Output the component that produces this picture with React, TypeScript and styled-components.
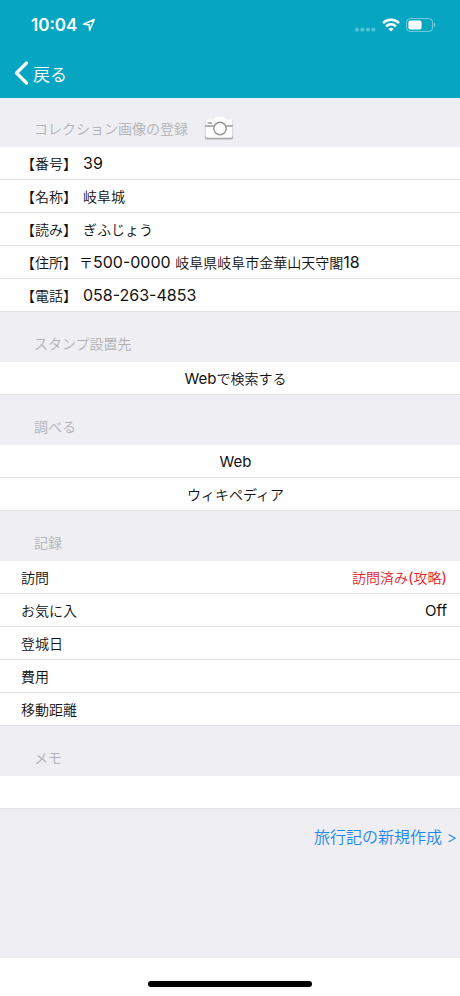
import React from "react";
import styled, { createGlobalStyle } from "styled-components";

const GlobalStyle = createGlobalStyle`
  *, *::before, *::after { box-sizing: border-box; }
  body {
    margin: 0;
    background: #fff;
    color: #111;
    font-family: Inter, "Noto Sans CJK JP", sans-serif;
    font-size: 14px;
    font-weight: 350;
  }
  button, input { font: inherit; color: inherit; }
`;

const Screen = styled.div`
  display: flex;
  flex-direction: column;
  min-height: 100vh;
`;

const TopBar = styled.header`
  display: flex;
  flex-direction: column;
  background: #06a6c3;
  color: #fff;
`;

const StatusBar = styled.div`
  display: flex;
  align-items: center;
  justify-content: space-between;
  height: 50px;
  padding: 0 24px 0 31px;
`;

const Clock = styled.div`
  display: flex;
  align-items: center;
  gap: 5px;
  font-size: 17px;
  font-weight: 600;
`;

const Indicators = styled.div`
  display: flex;
  align-items: center;
  gap: 6px;
`;

const BackButton = styled.button`
  display: flex;
  align-items: center;
  align-self: flex-start;
  gap: 4px;
  height: 48px;
  padding: 0 14px 2px;
  border: 0;
  background: none;
  font-size: 17px;
`;

const Content = styled.main`
  flex: 1;
  background: #eeeef3;
`;

const SectionHeader = styled.div<{ $first?: boolean }>`
  display: flex;
  align-items: flex-end;
  gap: 16px;
  height: ${(p) => (p.$first ? 49 : 50)}px;
  padding: 0 34px 6px;
`;

const SectionTitle = styled.h2`
  margin: 0;
  color: #b2b2b6;
  font-size: 14px;
  font-weight: 350;
  line-height: 24px;
`;

const CameraButton = styled.button`
  display: flex;
  padding: 0;
  border: 0;
  background: none;
`;

const List = styled.div`
  background: #fff;
`;

const Row = styled.div`
  display: flex;
  align-items: center;
  height: 33px;
  padding: 0 13px 0 21px;
  border-bottom: 1px solid #e2e2e5;
`;

const DetailList = styled.dl`
  margin: 0;
  background: #fff;
`;

const DetailName = styled.dt`
  min-width: 58px;
`;

const DetailValue = styled.dd<{ $tight?: boolean }>`
  margin: 0;
  padding-left: ${(p) => (p.$tight ? 0 : 4)}px;
  white-space: nowrap;
`;

const Latin = styled.span`
  font-size: 15px;
  font-weight: 400;
`;

const Digits = styled.span`
  font-size: 16px;
  font-weight: 400;
  line-height: 20px;
`;

const ActionButton = styled.button`
  display: block;
  width: 100%;
  height: 33px;
  padding: 0 0 0 11px;
  border: 0;
  border-bottom: 1px solid #e2e2e5;
  background: #fff;
  text-align: center;
`;

const ChoiceButton = styled.button<{ $alert?: boolean }>`
  flex: 1;
  padding: 0;
  border: 0;
  background: none;
  color: ${(p) => (p.$alert ? "#e8232b" : "inherit")};
  text-align: right;
`;

const Field = styled.input`
  flex: 1;
  min-width: 0;
  height: 28px;
  padding: 0;
  border: 0;
  outline: 0;
  background: none;
  text-align: right;
`;

const FieldLabel = styled.label`
  min-width: 58px;
`;

const LinkLine = styled.div`
  display: flex;
  justify-content: flex-end;
  padding: 16px 3px;
`;

const TravelLink = styled.a`
  color: #1f86ee;
  font-size: 16px;
  line-height: 24px;
  text-decoration: none;
`;

const HomeArea = styled.footer`
  display: flex;
  justify-content: center;
  align-items: flex-end;
  height: 38px;
  padding-bottom: 9px;
  background: #fff;
`;

const HomeBar = styled.div`
  width: 164px;
  height: 6px;
  border-radius: 3px;
  background: #000;
`;

const LocationIcon = () => (
  <svg width="14" height="14" viewBox="0 0 14 14" fill="none" aria-hidden="true">
    <path d="M1.5 6.3 12.3 1.5 7.6 12.3 7.2 6.8Z" stroke="#fff" strokeWidth="1.5" strokeLinejoin="round" />
  </svg>
);

const SignalDots = () => (
  <svg width="22" height="14" viewBox="0 0 22 14" fill="#fff" fillOpacity="0.3" aria-hidden="true">
    <rect x="1" y="9.8" width="3.8" height="3.8" rx="1.4" />
    <rect x="6.5" y="9.8" width="3.8" height="3.8" rx="1.4" />
    <rect x="12" y="9.8" width="3.8" height="3.8" rx="1.4" />
    <rect x="17.5" y="9.8" width="3.8" height="3.8" rx="1.4" />
  </svg>
);

const WifiIcon = () => (
  <svg width="18" height="14" viewBox="0 0 18 14" fill="none" stroke="#fff" aria-hidden="true">
    <path d="M1 5.1C5.4 .7 12.6 .7 17 5.1" strokeWidth="2.6" />
    <path d="M4.1 8.3C6.9 5.7 11.1 5.7 13.9 8.3" strokeWidth="2.5" />
    <path d="M6.3 10.7C7.8 9.3 10.2 9.3 11.7 10.7L9 13.4Z" fill="#fff" stroke="none" />
  </svg>
);

const BatteryIcon = () => (
  <svg width="30" height="14" viewBox="0 0 30 14" fill="none" aria-hidden="true">
    <rect x="0.6" y="0.6" width="26" height="12.8" rx="3.5" stroke="#fff" strokeOpacity="0.45" />
    <rect x="2.4" y="2.4" width="13.2" height="9.2" rx="2" fill="#fff" />
    <path d="M28 4.8C29.7 5.4 29.7 8.6 28 9.2Z" fill="#fff" fillOpacity="0.5" />
  </svg>
);

const BackIcon = () => (
  <svg width="15" height="24" viewBox="0 0 15 24" fill="none" aria-hidden="true">
    <path d="M12.5 2 2.5 12 12.5 22" stroke="#fff" strokeWidth="3.2" strokeLinecap="round" strokeLinejoin="round" />
  </svg>
);

const CameraIcon = () => (
  <svg width="30" height="26" viewBox="0 0 30 26" aria-hidden="true">
    <path
      d="M3 5.5H9L11.5 3H20L22 6H27Q29.2 6 29.2 8V22.500Q29.200 24.800 27 24.800H3Q.8 24.800 .8 22.500V8Q.8 5.500 3 5.500Z"
      fill="#c9c9cd"
    />
    <path
      d="M3 5H9L11.500 2.200H20L22 5H27Q28.800 5 28.800 7V22Q28.800 24 26.800 24H3.200Q1.200 24 1.200 22V7Q1.200 5 3 5Z"
      fill="#a6a6aa"
    />
    <path
      d="M3 4.500H9L11.500 1.800H20L22 4.500H27Q28.600 4.500 28.600 6.500V20.800Q28.600 22.800 26.600 22.800H3.400Q1.400 22.800 1.400 20.800V6.500Q1.400 4.500 3 4.500Z"
      fill="#fdfdfd"
    />
    <g fill="none" stroke="#98989b" strokeWidth="1.5">
      <path d="M1.4 11H9.500M22.500 11H28.600M3.500 8H8" />
      <circle cx="16" cy="13.500" r="6.200" />
    </g>
  </svg>
);

type Detail = { name: string; value: React.ReactNode; tight?: boolean };

const details: Detail[] = [
  { name: "【番号】", value: <Digits>39</Digits> },
  { name: "【名称】", value: "岐阜城" },
  { name: "【読み】", value: "ぎふじょう" },
  {
    name: "【住所】",
    tight: true,
    value: (
      <>
        〒<Digits>500-0000 </Digits>岐阜県岐阜市金華山天守閣<Digits>18</Digits>
      </>
    ),
  },
  { name: "【電話】", value: <Digits>058-263-4853</Digits> },
];

const recordFields = [
  { id: "date", label: "登城日" },
  { id: "cost", label: "費用" },
  { id: "distance", label: "移動距離" },
];

export default function App() {
  return (
    <Screen>
      <GlobalStyle />
      <TopBar>
        <StatusBar>
          <Clock>
            10:04
            <LocationIcon />
          </Clock>
          <Indicators>
            <SignalDots />
            <WifiIcon />
            <BatteryIcon />
          </Indicators>
        </StatusBar>
        <BackButton type="button">
          <BackIcon />
          戻る
        </BackButton>
      </TopBar>

      <Content>
        <SectionHeader $first>
          <SectionTitle>コレクション画像の登録</SectionTitle>
          <CameraButton type="button" aria-label="コレクション画像の登録">
            <CameraIcon />
          </CameraButton>
        </SectionHeader>
        <DetailList>
          {details.map((d) => (
            <Row key={d.name}>
              <DetailName>{d.name}</DetailName>
              <DetailValue $tight={d.tight}>{d.value}</DetailValue>
            </Row>
          ))}
        </DetailList>

        <SectionHeader>
          <SectionTitle>スタンプ設置先</SectionTitle>
        </SectionHeader>
        <ActionButton type="button">
          <Latin>Web</Latin>で検索する
        </ActionButton>

        <SectionHeader>
          <SectionTitle>調べる</SectionTitle>
        </SectionHeader>
        <ActionButton type="button">
          <Latin>Web</Latin>
        </ActionButton>
        <ActionButton type="button">ウィキペディア</ActionButton>

        <SectionHeader>
          <SectionTitle>記録</SectionTitle>
        </SectionHeader>
        <List>
          <Row>
            <FieldLabel htmlFor="visit">訪問</FieldLabel>
            <ChoiceButton id="visit" type="button" $alert>
              訪問済み<Latin>(</Latin>攻略<Latin>)</Latin>
            </ChoiceButton>
          </Row>
          <Row>
            <FieldLabel htmlFor="favorite">お気に入</FieldLabel>
            <ChoiceButton id="favorite" type="button">
              <Latin>Off</Latin>
            </ChoiceButton>
          </Row>
          {recordFields.map((f) => (
            <Row key={f.id}>
              <FieldLabel htmlFor={f.id}>{f.label}</FieldLabel>
              <Field id={f.id} type="text" />
            </Row>
          ))}
        </List>

        <SectionHeader>
          <SectionTitle id="memo-title">メモ</SectionTitle>
        </SectionHeader>
        <List>
          <Row>
            <Field type="text" aria-labelledby="memo-title" />
          </Row>
        </List>

        <LinkLine>
          <TravelLink href="#new-travelogue">旅行記の新規作成 &gt;</TravelLink>
        </LinkLine>
      </Content>

      <HomeArea>
        <HomeBar />
      </HomeArea>
    </Screen>
  );
}
